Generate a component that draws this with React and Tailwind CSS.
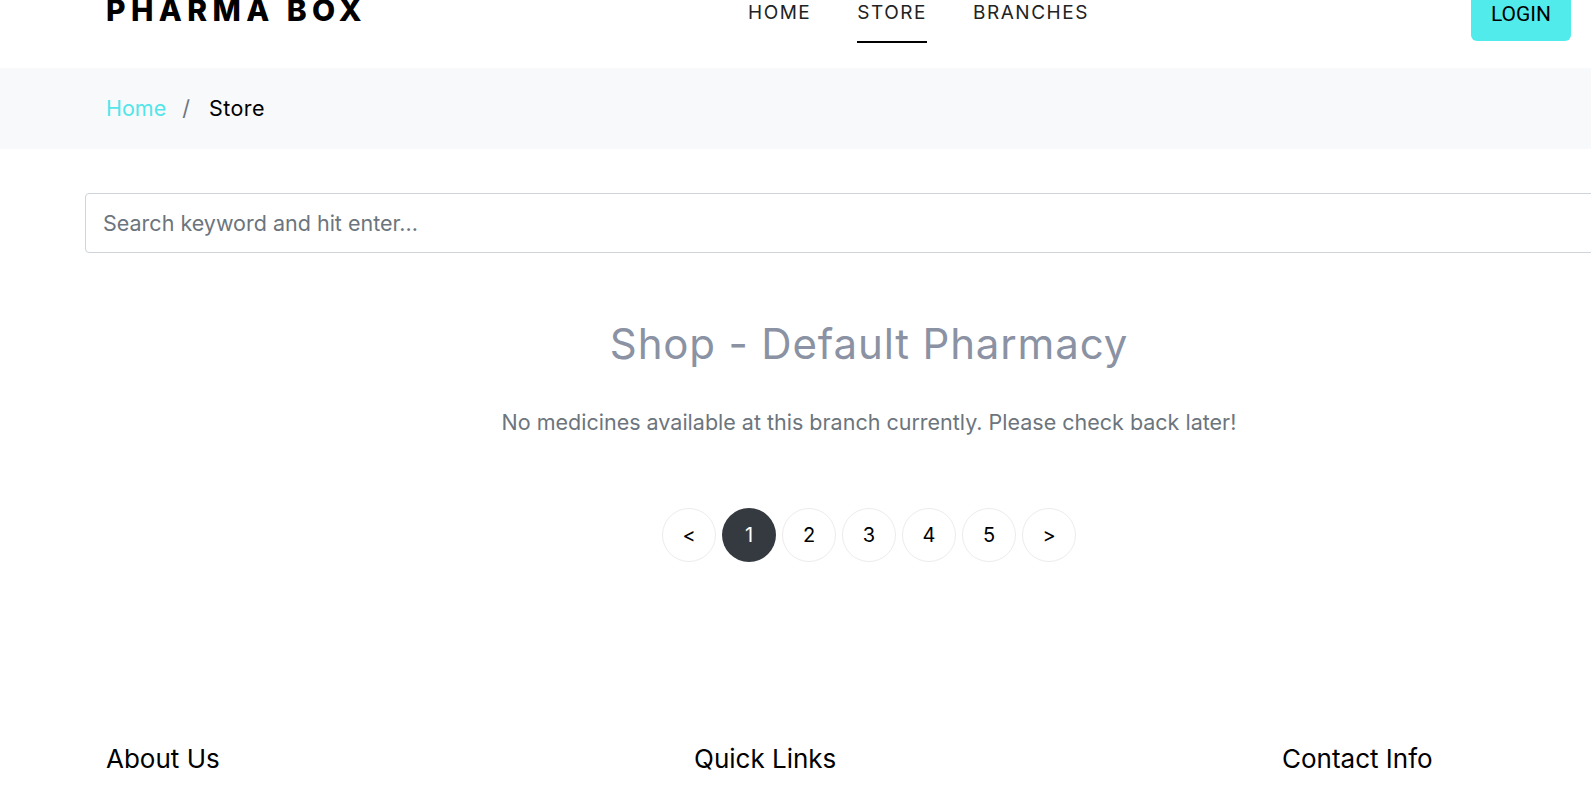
import React from "react";

const navLinks = [
  { label: "HOME", active: false },
  { label: "STORE", active: true },
  { label: "BRANCHES", active: false },
];

const pages = ["<", "1", "2", "3", "4", "5", ">"];

const App = () => {
  return (
    <div className="w-full min-h-screen overflow-hidden bg-white font-['Inter',sans-serif] text-black">
      <div className="-mt-[22px]">
        {/* header */}
        <header className="h-[90px] flex items-start">
          <div className="w-[724px] pl-[106px] pt-[17px] shrink-0">
            <span className="text-[30px] leading-[30px] font-extrabold tracking-[0.18em] text-black">
              PHARMA BOX
            </span>
          </div>
          <nav className="flex gap-[46px] pt-[21px] pl-[24px]">
            {navLinks.map(l => (
              <a
                key={l.label}
                href="#"
                className={`inline-block text-[19px] leading-[27px] tracking-[0.08em] text-[#222] pb-[15px] border-b-2 ${
                  l.active ? "border-black" : "border-transparent"
                }`}
              >
                {l.label}
              </a>
            ))}
          </nav>
          <div className="ml-auto mr-[20px] pt-[11px]">
            <button className="w-[100px] h-[52px] rounded-[6px] bg-[#52ebeb] text-[21px] font-['Roboto',sans-serif] text-black">
              LOGIN
            </button>
          </div>
        </header>

        {/* breadcrumb */}
        <div className="h-[81px] bg-[#f8f9fa] flex items-center pl-[106px] text-[21.5px]">
          <a href="#" className="text-[#52e5ea]">Home</a>
          <span className="pl-[16px] pr-[19px] text-[#6c757d]">/</span>
          <span className="text-black tracking-[0.02em]">Store</span>
        </div>

        {/* store */}
        <div className="pt-[44px] pl-[85px]">
          <div className="w-[1568px]">
            <input
              type="text"
              placeholder="Search keyword and hit enter..."
              className="w-full h-[60px] border border-[#ced4da] rounded-[4px] pl-[17px] text-[21.5px] text-[#495057] placeholder:text-[#6c757d] outline-none"
            />
            <h1 className="mt-[67px] text-center text-[42px] leading-[48px] tracking-[0.02em] font-normal text-[#8a92a3]">
              Shop - Default Pharmacy
            </h1>
            <p className="mt-[39px] text-center text-[21.5px] leading-[30px] text-[#6c757d]">
              No medicines available at this branch currently. Please check back later!
            </p>
            <div className="mt-[71px] flex justify-center gap-[6px]">
              {pages.map(p => (
                <a
                  key={p}
                  href="#"
                  className={`w-[54px] h-[54px] rounded-full flex items-center justify-center text-[20px] ${
                    p === "1"
                      ? "bg-[#343a40] text-white"
                      : "border border-[#ececec] text-black"
                  }`}
                >
                  {p}
                </a>
              ))}
            </div>
          </div>
        </div>

        {/* footer */}
        <footer className="mt-[181px] pl-[106px] grid grid-cols-[588px_588px_588px]">
          <h3 className="text-[26px] leading-[32px] font-normal">About Us</h3>
          <h3 className="text-[26px] leading-[32px] font-normal">Quick Links</h3>
          <h3 className="text-[26px] leading-[32px] font-normal">Contact Info</h3>
        </footer>
      </div>
    </div>
  );
};

export default App;
